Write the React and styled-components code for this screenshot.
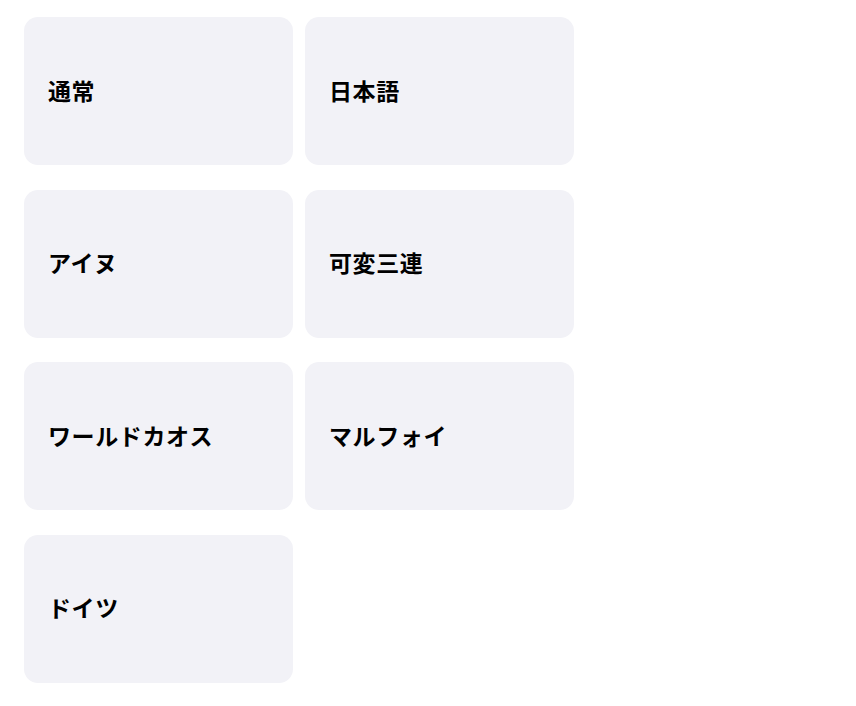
import React from "react";
import styled, { createGlobalStyle } from "styled-components";

const GlobalStyle = createGlobalStyle`
  body {
    margin: 0;
    background: #ffffff;
    font-family: "Noto Sans CJK JP", "Noto Sans", sans-serif;
  }
`

const Grid = styled.div`
  display: grid;
  grid-template-columns: repeat(2, 269px);
  grid-auto-rows: 148px;
  column-gap: 12px;
  row-gap: 24.67px;
  padding: 17px 24px;
`

const Card = styled.div`
  display: flex;
  align-items: center;
  padding: 0 24px 3px;
  background: #f2f2f7;
  border-radius: 14px;
  font-size: 23px;
  font-weight: 700;
  color: #000;
  letter-spacing: 0.6px;
`

const items = ["通常", "日本語", "アイヌ", "可変三連", "ワールドカオス", "マルフォイ", "ドイツ"];

export default function App() {
  return (
    <>
      <GlobalStyle />
      <Grid>
        {items.map((label) => (
          <Card key={label}>{label}</Card>
        ))}
      </Grid>
    </>
  );
}
